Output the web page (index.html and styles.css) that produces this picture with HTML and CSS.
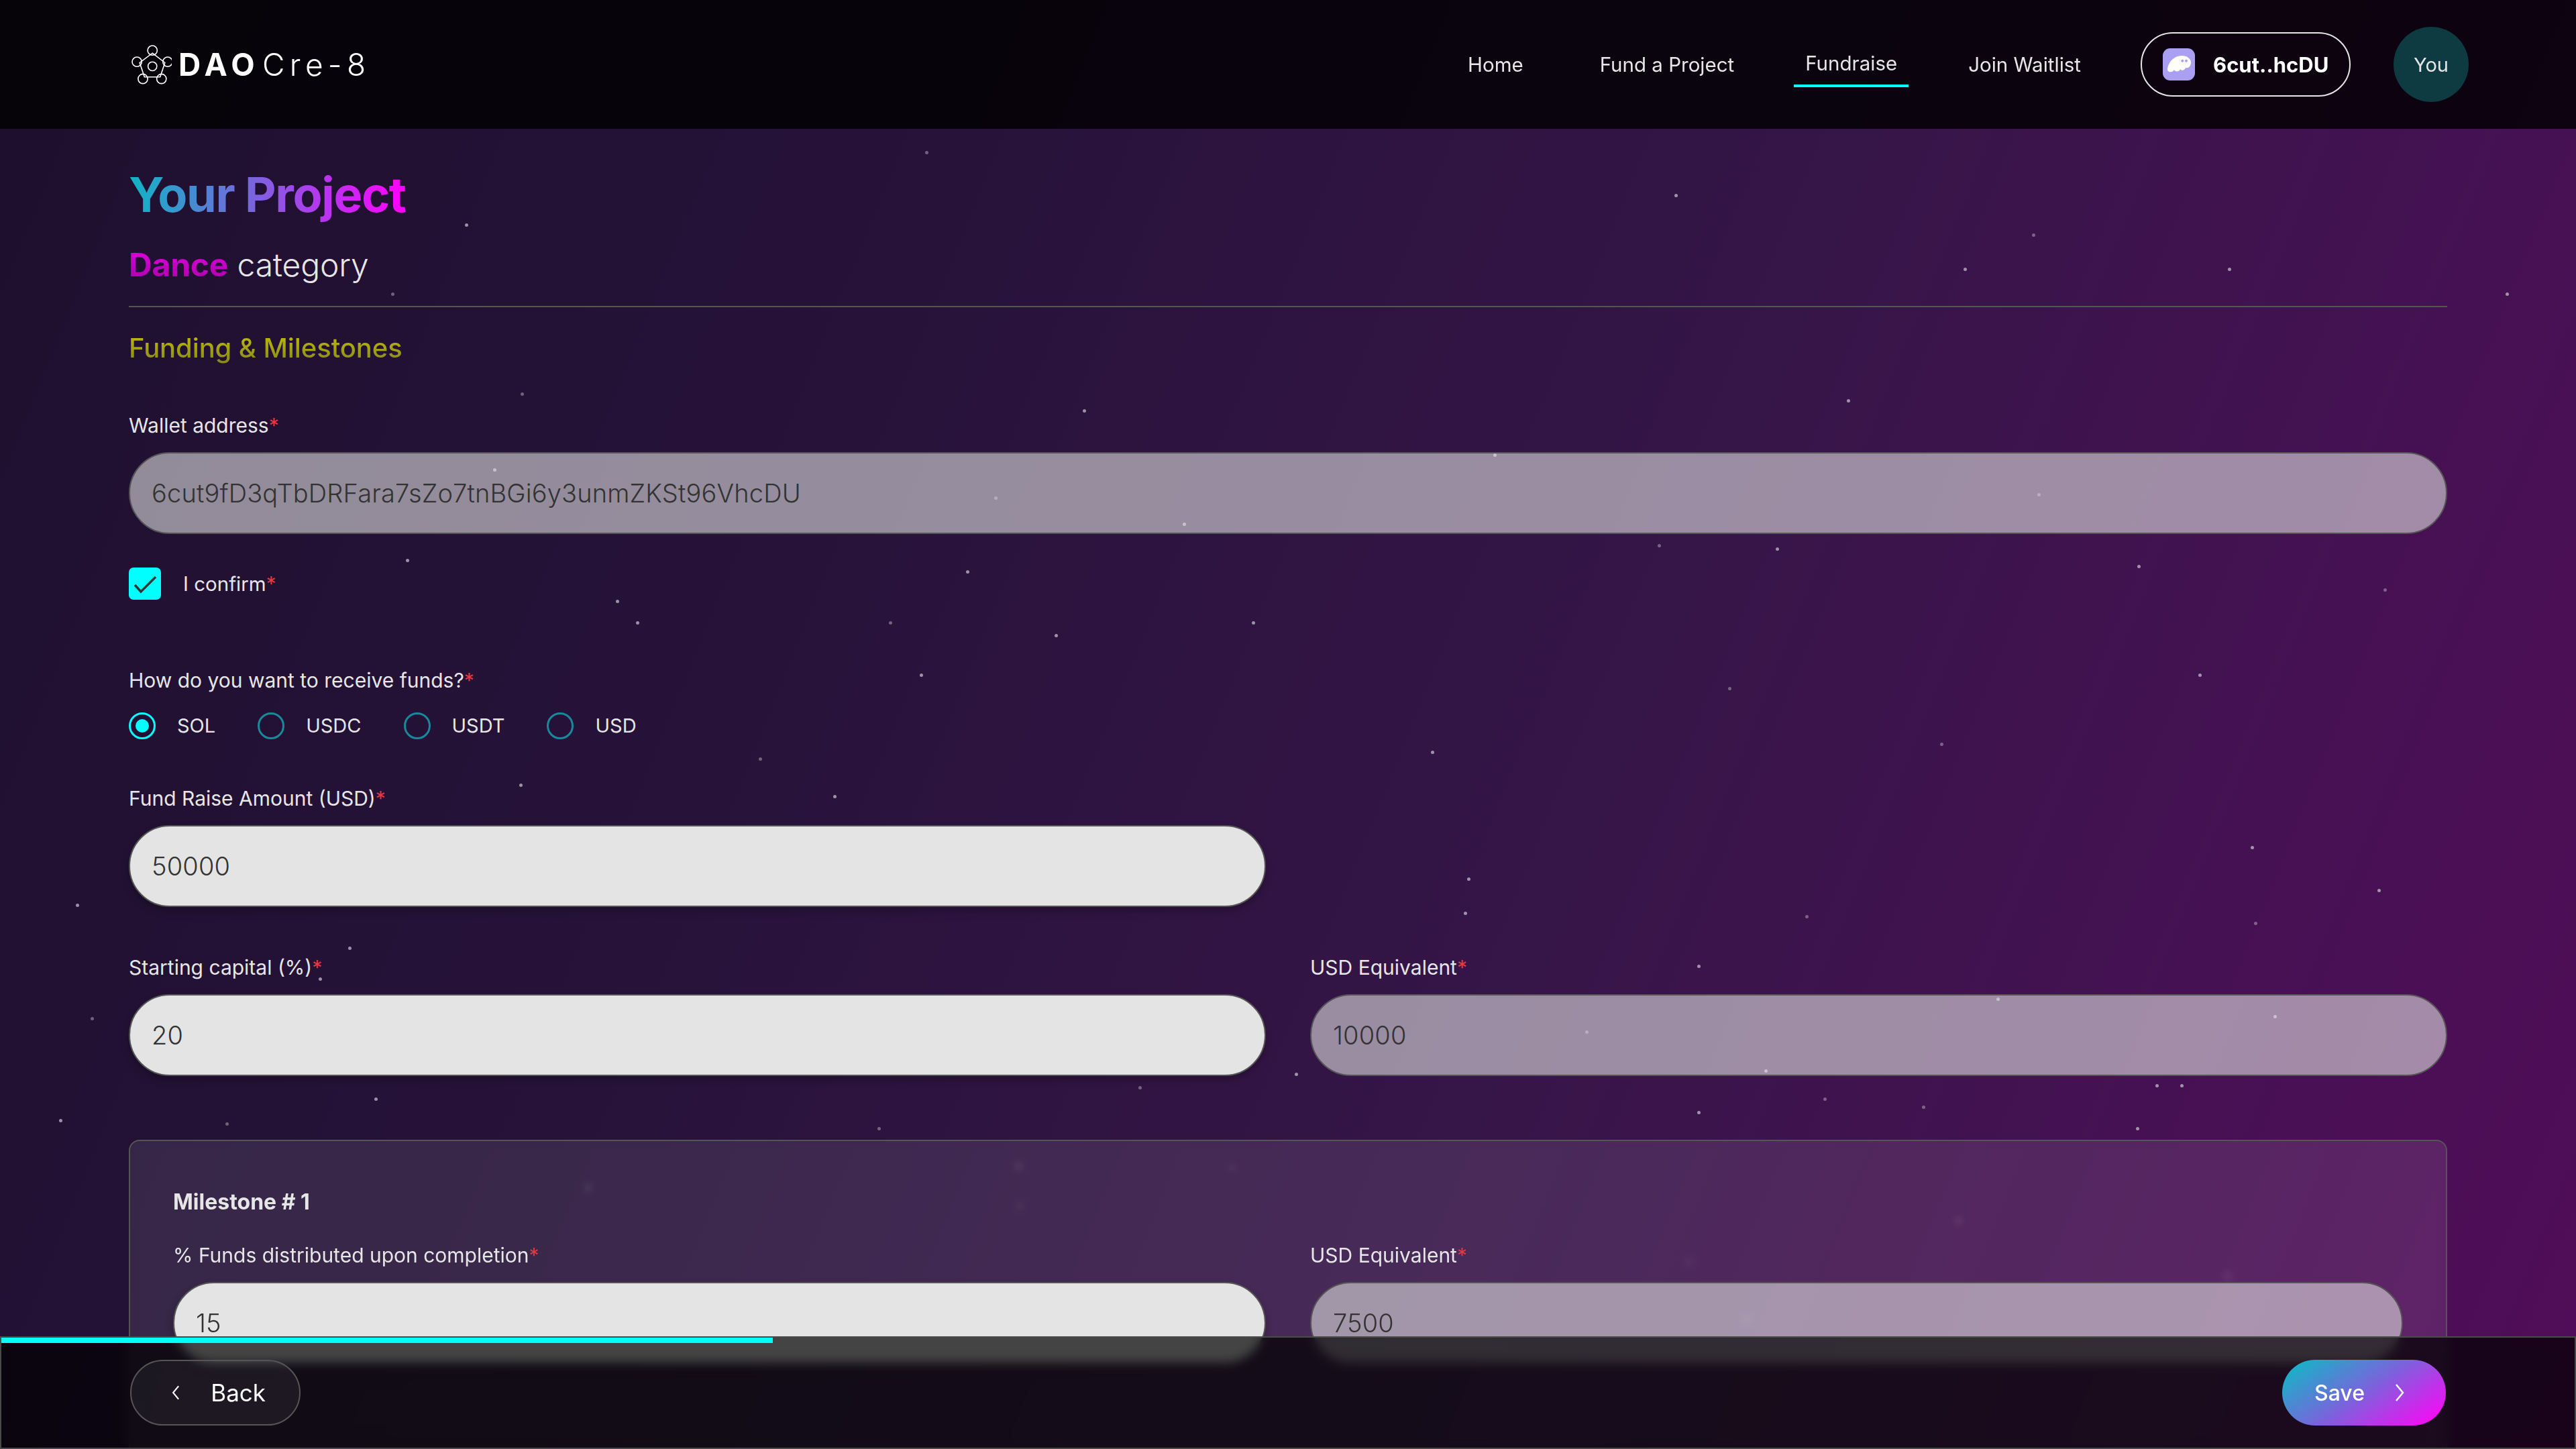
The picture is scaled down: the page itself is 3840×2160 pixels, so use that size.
FILE: index.html
```html
<!DOCTYPE html>
<html lang="en">

<head>
    <meta charset="UTF-8">
    <meta name="viewport" content="width=device-width, initial-scale=1.0">
    <title>DAOCre-8</title>
    <link rel="stylesheet" href="styles.css">
</head>

<body>
    <div id="stars" class="stars"></div>

    <header class="topbar">
        <a href="#" class="logo">
            <svg class="logo-mark" viewBox="5 5 60 60" fill="none" stroke="#fff" stroke-width="1.6">
                <path d="M36.7 18 55 32 48 53H25L18 32Z" />
                <circle cx="36.7" cy="14" r="7" />
                <circle cx="59" cy="30.7" r="7" />
                <circle cx="50" cy="55.7" r="7" />
                <circle cx="22.7" cy="55.7" r="7" />
                <circle cx="14" cy="30.7" r="7" />
                <circle cx="36.7" cy="37.3" r="6.5" />
            </svg>
            <span class="logo-text"><b>DAO</b>Cre-8</span>
        </a>
        <nav class="nav">
            <a href="#">Home</a>
            <a href="#">Fund a Project</a>
            <a href="#" class="active">Fundraise</a>
            <a href="#">Join Waitlist</a>
        </nav>
        <button class="wallet">
            <svg class="wallet-icon" viewBox="0 0 48 48">
                <rect width="48" height="48" rx="11" fill="#ab9ff2" />
                <path fill="#fffdf8" d="M7 30C9 20 17 11 28 11c9 0 14 5 14 10 0 6-4 9-8 8-1 4-6 5-8 2-1 4-7 5-9 1-2 4-7 4-9 2-1-1-1-2-1-4Z" />
                <circle cx="29.3" cy="18.7" r="2" fill="#ab9ff2" />
                <circle cx="35" cy="18.7" r="2" fill="#ab9ff2" />
            </svg>
            6cut..hcDU
        </button>
        <div class="avatar">You</div>
    </header>

    <main class="page">
        <h1 class="title"><span>Your Project</span></h1>
        <div class="subtitle"><span class="cat-name">Dance</span> category</div>

        <h2 class="section-title"><span>Funding &amp; Milestones</span></h2>

        <div class="field wallet-field">
            <label>Wallet address<i>*</i></label>
            <input type="text" class="disabled" value="6cut9fD3qTbDRFara7sZo7tnBGi6y3unmZKSt96VhcDU" readonly>
        </div>

        <label class="confirm">
            <span class="checkbox">
                <svg viewBox="0 0 48 48" fill="none" stroke="#333" stroke-width="3.5">
                    <path d="M9 26l9 10L40 14" />
                </svg>
            </span>
            <span>I confirm<i>*</i></span>
        </label>

        <div class="field funds-field">
            <label>How do you want to receive funds?<i>*</i></label>
            <div class="radios">
                <label class="radio on"><span class="dot"></span>SOL</label>
                <label class="radio"><span class="dot"></span>USDC</label>
                <label class="radio"><span class="dot"></span>USDT</label>
                <label class="radio"><span class="dot"></span>USD</label>
            </div>
        </div>

        <div class="row amount-row">
            <div class="field">
                <label>Fund Raise Amount (USD)<i>*</i></label>
                <input type="text" value="50000" readonly>
            </div>
        </div>

        <div class="row capital-row">
            <div class="field">
                <label>Starting capital (%)<i>*</i></label>
                <input type="text" value="20" readonly>
            </div>
            <div class="field">
                <label>USD Equivalent<i>*</i></label>
                <input type="text" class="disabled" value="10000" readonly>
            </div>
        </div>

        <section class="milestone">
            <h3>Milestone # 1</h3>
            <div class="row">
                <div class="field">
                    <label>% Funds distributed upon completion<i>*</i></label>
                    <input type="text" value="15" readonly>
                </div>
                <div class="field">
                    <label>USD Equivalent<i>*</i></label>
                    <input type="text" class="disabled" value="7500" readonly>
                </div>
            </div>
        </section>
    </main>

    <footer class="bottombar">
        <div class="progress"></div>
        <button class="btn-back">
            <svg viewBox="0 0 20 32" fill="none" stroke="currentColor" stroke-width="2.5">
                <path d="M15 4 5 16l10 12" />
            </svg>
            Back
        </button>
        <button class="btn-save">
            Save
            <svg viewBox="0 0 20 32" fill="none" stroke="currentColor" stroke-width="2.5">
                <path d="M5 4l10 12L5 28" />
            </svg>
        </button>
    </footer>

    <script src="stars.js"></script>
</body>

</html>
```

FILE: styles.css
```css
* {
    box-sizing: border-box;
}

html,
body {
    margin: 0;
    height: 100%;
}

body {
    position: relative;
    height: 2160px;
    overflow: hidden;
    font-family: 'Inter', 'Liberation Sans', sans-serif;
    color: #e6e6e6;
    background: linear-gradient(112deg, #1e0f2e 0%, #28133b 35%, #371549 62%, #520d5a 100%);
}

i {
    font-style: normal;
    color: #e8383f;
}

.stars {
    position: absolute;
    inset: 0;
}

.star {
    position: absolute;
    width: 5px;
    height: 5px;
    border-radius: 50%;
    background-color: #b9b3c0;
}

/* top bar */
.topbar {
    position: fixed;
    top: 0;
    left: 0;
    right: 0;
    z-index: 5;
    height: 192px;
    padding: 0 160px 0 195px;
    display: flex;
    align-items: center;
    background-color: rgba(0, 0, 0, 0.8);
}

.logo {
    display: flex;
    align-items: center;
    gap: 10px;
    margin-right: auto;
    color: #fff;
    text-decoration: none;
}

.logo-mark {
    width: 61px;
    height: 61px;
}

.logo-text {
    font-size: 46px;
    font-weight: 300;
    letter-spacing: 7.3px;
}

.logo-text b {
    font-weight: 700;
    margin-right: 4px;
}

.nav {
    display: flex;
    gap: 72px;
}

.nav a {
    position: relative;
    padding: 0 17px;
    font-size: 29.5px;
    color: #e6e6e6;
    text-decoration: none;
}

.nav a:first-child {
    margin-right: 8px;
}

.nav a.active {
    top: -2px;
}

.nav a.active::after {
    content: "";
    position: absolute;
    left: 0;
    right: 0;
    top: 50px;
    height: 4px;
    background-color: #00ffff;
}

.wallet {
    display: flex;
    align-items: center;
    gap: 27px;
    width: 313px;
    height: 96px;
    margin-left: 72px;
    padding: 0 31px;
    border: 2px solid #e6e6e6;
    border-radius: 48px;
    background: none;
    color: #fff;
    font-family: inherit;
    font-size: 31px;
    font-weight: 700;
    white-space: nowrap;
}

.wallet-icon {
    flex: none;
    width: 48px;
    height: 48px;
}

.avatar {
    width: 112px;
    height: 112px;
    margin-left: 64px;
    border-radius: 50%;
    background-color: #0e3a42;
    display: flex;
    align-items: center;
    justify-content: center;
    font-size: 29px;
}

/* page */
.page {
    position: relative;
    z-index: 1;
    padding: 192px 192px 0;
}

.title {
    margin: 48px 0 0;
    font-size: 72px;
    font-weight: 700;
    line-height: 100px;
    letter-spacing: -1.4px;
}

.title span {
    background: linear-gradient(90deg, #0fb5c4, #ff00ff);
    -webkit-background-clip: text;
    background-clip: text;
    color: transparent;
}

.subtitle {
    margin-top: 25px;
    padding-bottom: 31px;
    border-bottom: 2px solid #555;
    font-size: 48px;
    font-weight: 300;
    line-height: 60px;
    letter-spacing: -0.2px;
}

.cat-name {
    font-weight: 700;
    background: linear-gradient(180deg, #e400e4, #a800a8);
    -webkit-background-clip: text;
    background-clip: text;
    color: transparent;
}

.section-title {
    margin: 36px 0 0;
    font-size: 40px;
    font-weight: 500;
    line-height: 50px;
    letter-spacing: -0.1px;
}

.section-title span {
    background: linear-gradient(180deg, #c4c400, #85851f);
    -webkit-background-clip: text;
    background-clip: text;
    color: transparent;
}

.field label {
    display: block;
    font-size: 30px;
    line-height: 40px;
}

.field input {
    display: block;
    width: 100%;
    height: 122px;
    margin-top: 20px;
    padding: 0 32px;
    border: 2px solid #555;
    border-radius: 61px;
    background-color: #e4e4e4;
    box-shadow: 0 6px 12px rgba(0, 0, 0, 0.25);
    outline: none;
    font-family: inherit;
    font-size: 38px;
    font-weight: 300;
    letter-spacing: 0.15px;
    color: #333;
}

.field input.disabled {
    background-color: rgba(230, 230, 230, 0.58);
    box-shadow: none;
}

.wallet-field {
    margin-top: 70px;
}

.confirm {
    display: flex;
    align-items: center;
    gap: 33px;
    margin-top: 50px;
    font-size: 29.5px;
}

.checkbox {
    width: 48px;
    height: 48px;
    border-radius: 7px;
    background-color: #00ffff;
}

.checkbox svg {
    display: block;
}

.funds-field {
    margin-top: 100px;
}

.radios {
    display: flex;
    margin-top: 28px;
}

.field .radio {
    display: flex;
    align-items: center;
    gap: 32px;
    margin-right: 63px;
    font-size: 29px;
    line-height: 40px;
}

.dot {
    width: 40px;
    height: 40px;
    padding: 7px;
    border: 3px solid #17899b;
    border-radius: 50%;
    background-clip: content-box;
}

.radio.on .dot {
    border-color: #00ffff;
    background-color: #00ffff;
}

.row {
    display: grid;
    grid-template-columns: 1fr 1fr;
    gap: 66px;
}

.amount-row {
    margin-top: 68px;
}

.capital-row {
    margin-top: 70px;
}

.milestone {
    margin-top: 95px;
    padding: 66px 64px 200px;
    border: 2px solid #555;
    border-radius: 16px;
    background-color: rgba(255, 255, 255, 0.09);
    backdrop-filter: blur(6px);
}

.milestone h3 {
    margin: 0 0 34px;
    font-size: 32px;
    font-weight: 700;
    line-height: 50px;
}

/* bottom bar */
.bottombar {
    position: fixed;
    left: 0;
    right: 0;
    top: 1992px;
    z-index: 5;
    height: 168px;
    padding: 0 192px;
    display: flex;
    align-items: center;
    justify-content: space-between;
    border: 2px solid #4a4a4a;
    background-color: rgba(0, 0, 0, 0.7);
    backdrop-filter: blur(8px);
}

.progress {
    position: absolute;
    left: 0;
    top: 0;
    width: 1150px;
    height: 8px;
    background-color: #00ffff;
}

.bottombar button {
    display: flex;
    align-items: center;
    height: 98px;
    border-radius: 49px;
    color: #fff;
    font-family: inherit;
    font-size: 32px;
}

.bottombar svg {
    width: 20px;
    height: 32px;
}

.bottombar .btn-back {
    width: 254px;
    gap: 44px;
    padding: 0 50px 0 58px;
    border: 2px solid #555;
    background-color: rgba(255, 255, 255, 0.05);
    font-size: 35px;
}

.btn-save {
    width: 244px;
    gap: 42px;
    padding: 0 0 0 48px;
    border: none;
    background: linear-gradient(145deg, #12b6c6 5%, #7c62dc 50%, #fb08f5 95%);
    font-weight: 500;
}
```

FILE: stars.js
```js
// star positions, measured on a 1568 wide page
var starList = [
    [563, 92], [283, 136], [1019, 118], [238, 178], [1356, 163], [1525, 178], [1237, 142], [659, 249],
    [1124, 243], [317, 239], [909, 276], [1195, 163], [605, 302], [247, 340], [588, 347], [1009, 331],
    [1081, 333], [1301, 344], [1451, 358], [375, 365], [387, 378], [541, 378], [762, 378], [642, 386],
    [1052, 418], [1338, 410], [871, 457], [462, 461], [507, 484], [316, 477], [1181, 452], [1370, 515],
    [1447, 541], [1099, 557], [891, 555], [893, 534], [1372, 561], [1033, 587], [46, 550], [55, 619],
    [212, 576], [194, 595], [693, 661], [228, 668], [36, 681], [137, 683], [700, 607], [1215, 607],
    [965, 627], [1384, 618], [1074, 651], [1110, 668], [1312, 660], [1327, 660], [1170, 673], [788, 653],
    [1033, 676], [534, 686], [1300, 686], [619, 709], [749, 710], [1191, 742], [357, 722], [1027, 767],
    [1062, 802], [1355, 776], [620, 733], [300, 285], [720, 318], [1240, 300], [560, 410]
];

var starBox = document.getElementById('stars');
starList.forEach(function (p, i) {
    var star = document.createElement('span');
    star.className = 'star';
    star.style.left = (p[0] * 2.449) + 'px';
    star.style.top = (p[1] * 2.449) + 'px';
    star.style.opacity = i % 3 === 0 ? 0.5 : 0.8;
    starBox.appendChild(star);
});
```
